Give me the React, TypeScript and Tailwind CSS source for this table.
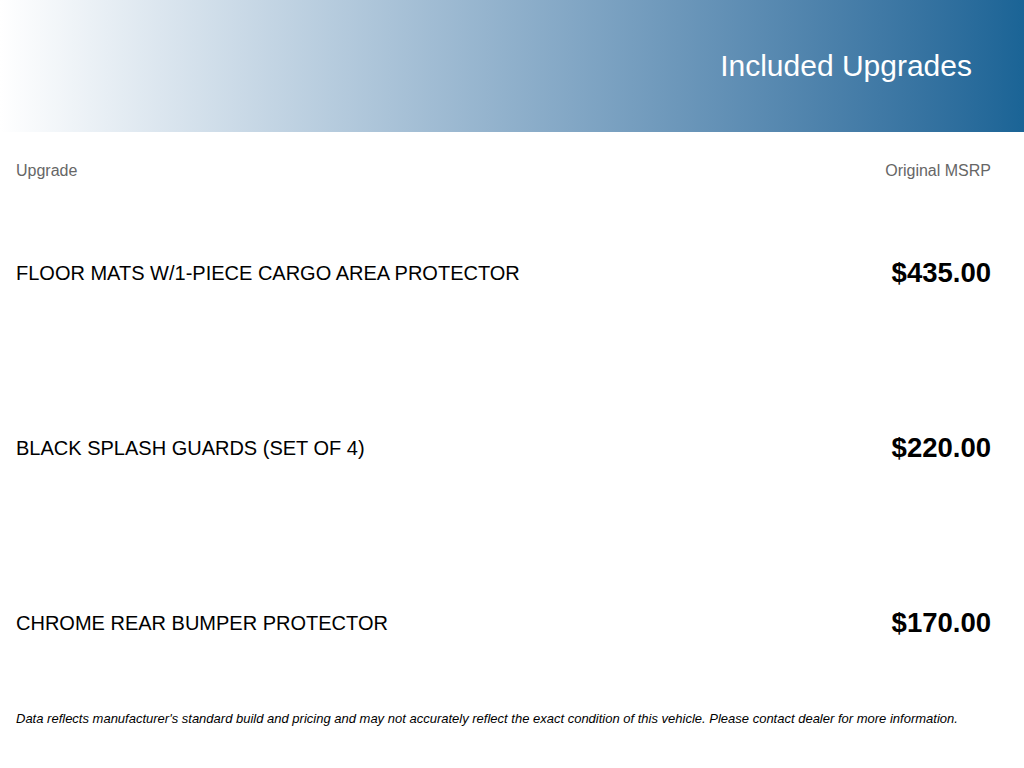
import React from "react";

const items = [
  { name: "FLOOR MATS W/1-PIECE CARGO AREA PROTECTOR", price: "$435.00" },
  { name: "BLACK SPLASH GUARDS (SET OF 4)", price: "$220.00" },
  { name: "CHROME REAR BUMPER PROTECTOR", price: "$170.00" },
];

export default function App() {
  return (
    <div
      className="w-[1024px] h-[768px] bg-white overflow-hidden"
      style={{ fontFamily: '"Liberation Sans", Arial, sans-serif' }}
    >
      <div className="h-[132px] bg-gradient-to-r from-white to-[#1a6496] flex items-center justify-end pr-[52px]">
        <h1 className="text-[30px] leading-[34px] text-white font-normal">Included Upgrades</h1>
      </div>
      <div className="pl-4 pr-[33px]">
        <div className="flex justify-between pt-[30px] text-[16px] leading-[18px] text-[#666666]">
          <span>Upgrade</span>
          <span>Original MSRP</span>
        </div>
        <div className="mt-[5px]">
          {items.map((it) => (
            <div key={it.name} className="h-[175px] flex items-center justify-between">
              <span className="text-[20px] leading-[22px] text-black">{it.name}</span>
              <span className="text-[27.5px] leading-[30px] font-bold text-black">{it.price}</span>
            </div>
          ))}
        </div>
        <p className="mt-[1px] text-[13px] leading-[16px] italic text-black">
          Data reflects manufacturer's standard build and pricing and may not accurately reflect the exact condition of this vehicle. Please contact dealer for more information.
        </p>
      </div>
    </div>
  );
}
